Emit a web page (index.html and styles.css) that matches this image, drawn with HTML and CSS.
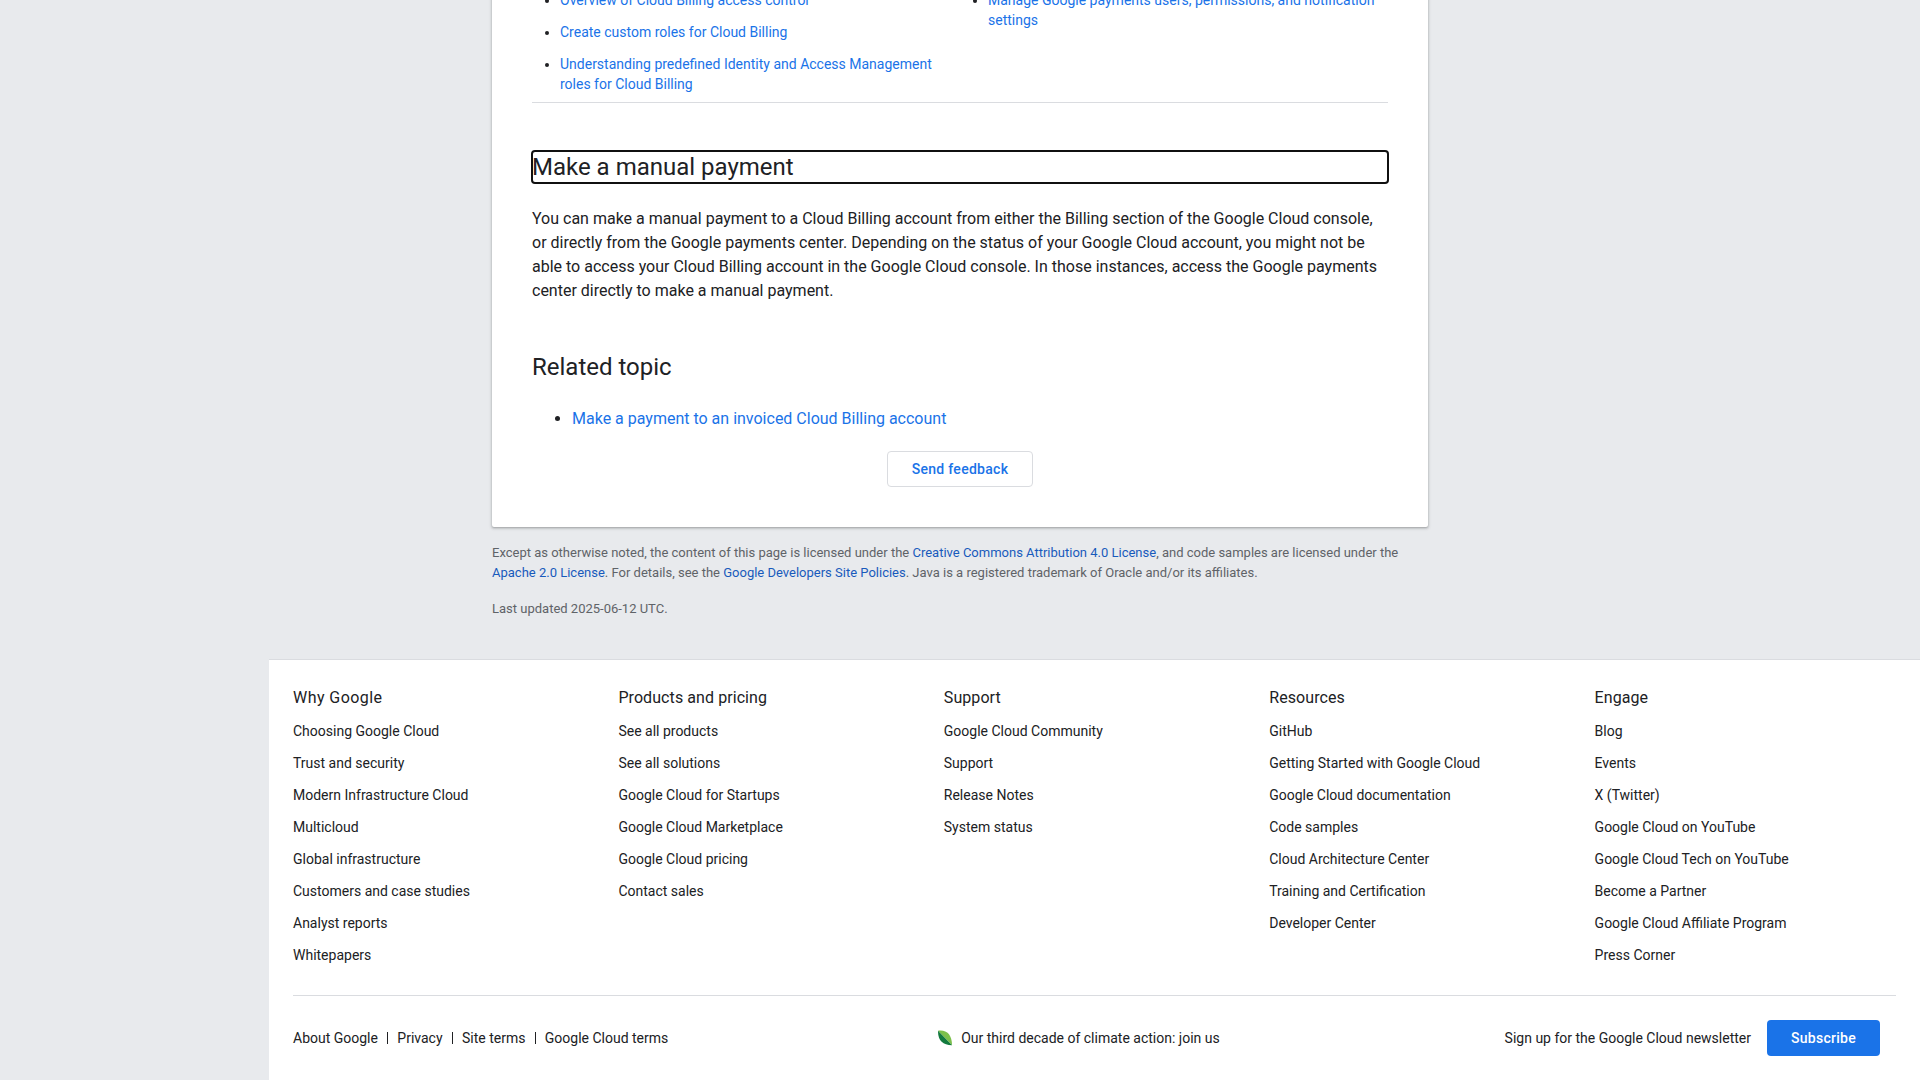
FILE: index.html
```html
<!DOCTYPE html>
<html lang="en">
<head>
<meta charset="utf-8">
<title>Make a payment | Cloud Billing | Google Cloud</title>
<link rel="stylesheet" href="styles.css">
</head>
<body>
<main class="main">
  <article class="card">
    <div class="permissions">
      <ul class="link-list">
        <li><a href="#">Overview of Cloud Billing access control</a></li>
        <li><a href="#">Create custom roles for Cloud Billing</a></li>
        <li><a href="#">Understanding predefined Identity and Access Management roles for Cloud Billing</a></li>
      </ul>
      <ul class="link-list">
        <li><a href="#">Manage Google payments users, permissions, and notification settings</a></li>
      </ul>
    </div>
    <h2 class="heading heading-focused">Make a manual payment</h2>
    <p class="text">You can make a manual payment to a Cloud Billing account from either the Billing section of the Google Cloud console, or directly from the Google payments center. Depending on the status of your Google Cloud account, you might not be able to access your Cloud Billing account in the Google Cloud console. In those instances, access the Google payments center directly to make a manual payment.</p>
    <h2 class="heading">Related topic</h2>
    <ul class="related">
      <li><a href="#">Make a payment to an invoiced Cloud Billing account</a></li>
    </ul>
    <button class="button feedback">Send feedback</button>
  </article>
  <div class="license">
    <p>Except as otherwise noted, the content of this page is licensed under the <a href="#">Creative Commons Attribution 4.0 License</a>, and code samples are licensed under the <a href="#">Apache 2.0 License</a>. For details, see the <a href="#">Google Developers Site Policies</a>. Java is a registered trademark of Oracle and/or its affiliates.</p>
    <p>Last updated 2025-06-12 UTC.</p>
  </div>
</main>
<footer class="footer">
  <nav class="columns">
    <section>
      <h3 class="wide">Why Google</h3>
      <ul>
        <li><a href="#">Choosing Google Cloud</a></li>
        <li><a href="#">Trust and security</a></li>
        <li><a href="#">Modern Infrastructure Cloud</a></li>
        <li><a href="#">Multicloud</a></li>
        <li><a href="#">Global infrastructure</a></li>
        <li><a href="#">Customers and case studies</a></li>
        <li><a href="#">Analyst reports</a></li>
        <li><a href="#">Whitepapers</a></li>
      </ul>
    </section>
    <section>
      <h3>Products and pricing</h3>
      <ul>
        <li><a href="#">See all products</a></li>
        <li><a href="#">See all solutions</a></li>
        <li><a href="#">Google Cloud for Startups</a></li>
        <li><a href="#">Google Cloud Marketplace</a></li>
        <li><a href="#">Google Cloud pricing</a></li>
        <li><a href="#">Contact sales</a></li>
      </ul>
    </section>
    <section>
      <h3>Support</h3>
      <ul>
        <li><a href="#">Google Cloud Community</a></li>
        <li><a href="#">Support</a></li>
        <li><a href="#">Release Notes</a></li>
        <li><a href="#">System status</a></li>
      </ul>
    </section>
    <section>
      <h3>Resources</h3>
      <ul>
        <li><a href="#">GitHub</a></li>
        <li><a href="#">Getting Started with Google Cloud</a></li>
        <li><a href="#">Google Cloud documentation</a></li>
        <li><a href="#">Code samples</a></li>
        <li><a href="#">Cloud Architecture Center</a></li>
        <li><a href="#">Training and Certification</a></li>
        <li><a href="#">Developer Center</a></li>
      </ul>
    </section>
    <section>
      <h3>Engage</h3>
      <ul>
        <li><a href="#">Blog</a></li>
        <li><a href="#">Events</a></li>
        <li><a href="#">X (Twitter)</a></li>
        <li><a href="#">Google Cloud on YouTube</a></li>
        <li><a href="#">Google Cloud Tech on YouTube</a></li>
        <li><a href="#">Become a Partner</a></li>
        <li><a href="#">Google Cloud Affiliate Program</a></li>
        <li><a href="#">Press Corner</a></li>
      </ul>
    </section>
  </nav>
  <div class="bottom">
    <ul class="legal">
      <li><a href="#">About Google</a></li>
      <li><a href="#">Privacy</a></li>
      <li><a href="#">Site terms</a></li>
      <li><a href="#">Google Cloud terms</a></li>
    </ul>
    <a class="climate" href="#">
      <svg class="leaf" viewBox="0 0 14 16" aria-hidden="true">
        <path fill="#7cc04b" d="M0 .8C8-.6 14 4 14 15.2Z"/>
        <path fill="#137a3e" d="M0 .8C-.2 10 4.500 15 14 15.200Z"/>
      </svg>
      <span>Our third decade of climate action: join us</span>
    </a>
    <div class="newsletter">
      <span>Sign up for the Google Cloud newsletter</span>
      <button class="button subscribe">Subscribe</button>
    </div>
  </div>
</footer>
</body>
</html>
```
FILE: styles.css
```css
* { box-sizing: border-box; }
html { overflow: hidden; }
body {
  margin: 0;
  background: #e8eaed;
  color: #202124;
  font: 400 16px/24px Roboto, sans-serif;
}
a { color: #1a73e8; text-decoration: none; }
ul { margin: 0; padding: 0; list-style: none; }

.main { width: 936px; margin: -50px 0 0 492px; }
.card {
  padding: 40px;
  background: #fff;
  border-radius: 2px;
  box-shadow: 0 1px 2px 0 rgba(60, 64, 67, .3), 0 1px 3px 1px rgba(60, 64, 67, .15);
}
.permissions {
  display: grid;
  grid-template-columns: 1fr 1fr;
  padding-bottom: 8px;
  border-bottom: 1px solid #dadce0;
  font-size: 14px;
  line-height: 20px;
}
.link-list { padding-left: 28px; list-style: disc; }
.link-list li + li { margin-top: 12px; }
.heading {
  margin: 48px 0 24px;
  font: 400 24px/32px "Google Sans", Roboto, sans-serif;
}
.heading-focused { outline: 2px solid #101010; outline-offset: -1px; border-radius: 3px; }
.text { margin: 0; }
.related { padding-left: 40px; list-style: disc; }
.button {
  display: block;
  height: 36px;
  padding: 0;
  border-radius: 4px;
  font: 500 14px/34px "Google Sans", Roboto, sans-serif;
  letter-spacing: .28px;
  white-space: nowrap;
}
.feedback {
  width: 146px;
  margin: 20px auto 0;
  border: 1px solid #dadce0;
  background: #fff;
  color: #1a73e8;
}

.license { color: #5f6368; font-size: 13px; line-height: 20px; }
.license p { margin: 16px 0 0; }
.license a { color: #185abc; }

.footer {
  height: 421px;
  margin: 40px 0 0 269px;
  padding: 0 24px;
  border-top: 1px solid #dadce0;
  background: #fff;
  font-size: 14px;
  line-height: 20px;
}
.footer a { color: #202124; }
.columns {
  display: grid;
  grid-template-columns: repeat(5, 1fr);
  gap: 24px;
  padding: 26px 0 24px;
  border-bottom: 1px solid #dadce0;
}
.columns h3 {
  margin: 0;
  font: 400 16px/24px "Google Sans", Roboto, sans-serif;
  letter-spacing: .08px;
}
.columns h3.wide { letter-spacing: .45px; }
.columns ul { padding-top: 5px; }
.columns li { height: 32px; padding: 6px 0; }
.bottom {
  display: flex;
  align-items: center;
  justify-content: space-between;
  padding: 24px 16px 0 0;
}
.legal { display: flex; }
.legal li { display: flex; align-items: center; }
.legal li + li::before { content: ""; width: 1px; height: 12px; margin: 0 9.200px; background: #202124; }
.climate { display: flex; align-items: center; gap: 9px; margin-right: 15px; }
.leaf { width: 14px; height: 16px; }
.newsletter { display: flex; align-items: center; gap: 16px; }
.subscribe { width: 113px; border: 0; background: #1a73e8; color: #fff; }
```
